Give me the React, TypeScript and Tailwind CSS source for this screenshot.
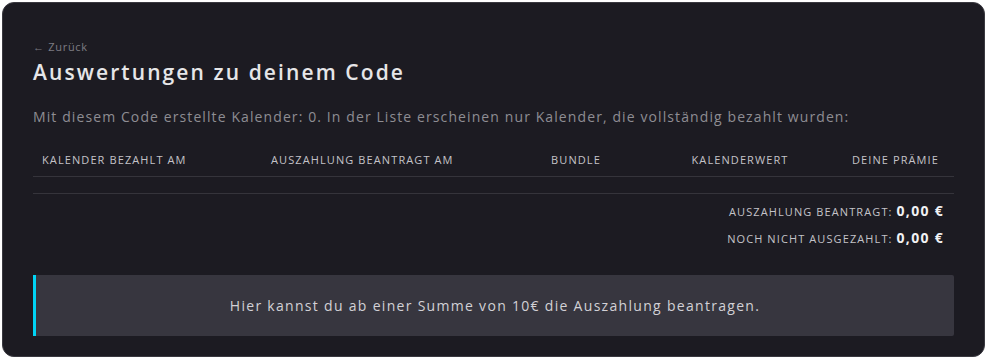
export default function App() {
  const columns = [
    { label: 'Kalender bezahlt am', cls: 'w-[238px] pl-[9px] text-left' },
    { label: 'Auszahlung beantragt am', cls: 'w-[250px] text-left' },
    { label: 'Bundle', cls: 'w-[110px] text-center' },
    { label: 'Kalenderwert', cls: 'w-[218px] text-center' },
    { label: 'Deine Prämie', cls: 'w-[105px] pr-[15px] text-right' },
  ]

  return (
    <div className="min-h-screen bg-white p-[2px] font-['Open_Sans',sans-serif]">
      <div className="h-[355px] rounded-[12px] border border-[#3a3940] bg-[#1c1b22] px-[30px] pt-[37px]">
        <a className="block text-[11px] leading-[14px] tracking-[0.7px] text-[#7d7c83]">← Zurück</a>
        <h1 className="mt-[5px] text-[21px] font-semibold leading-[26px] tracking-[2.1px] text-[#e6e6e8]">
          Auswertungen zu deinem Code
        </h1>
        <p className="mt-[22px] text-[14px] leading-[20px] tracking-[1.1px] text-[#8e8d93]">
          Mit diesem Code erstellte Kalender: 0. In der Liste erscheinen nur Kalender, die vollständig bezahlt wurden:
        </p>

        <div className="mt-[25px]">
          <div className="flex border-b border-[#35343b] pb-[8px] text-[11px] uppercase leading-[16px] tracking-[1.1px] text-[#c4c3c8]">
            {columns.map((c) => (
              <div key={c.label} className={c.cls}>
                {c.label}
              </div>
            ))}
          </div>
          <div className="h-[17px] border-b border-[#35343b]" />
        </div>

        <div className="mt-[7px] flex flex-col items-end gap-[6px] pr-[10px] text-[11px] uppercase tracking-[1.1px] text-[#c4c3c8]">
          <div className="flex items-baseline gap-[4px] leading-[20px]">
            <span>Auszahlung beantragt:</span>
            <span className="text-[14px] font-bold normal-case tracking-[1.3px] text-[#f1f1f3]">0,00 €</span>
          </div>
          <div className="flex items-baseline gap-[4px] leading-[20px]">
            <span>Noch nicht ausgezahlt:</span>
            <span className="text-[14px] font-bold normal-case tracking-[1.3px] text-[#f1f1f3]">0,00 €</span>
          </div>
        </div>

        <div className="mt-[26px] flex h-[61px] items-center justify-center rounded-r-[2px] border-l-[3px] border-[#00d4f5] bg-[#37363f] text-[14px] tracking-[1.3px] text-[#d2d1d6]">
          Hier kannst du ab einer Summe von 10€ die Auszahlung beantragen.
        </div>
      </div>
    </div>
  )
}
